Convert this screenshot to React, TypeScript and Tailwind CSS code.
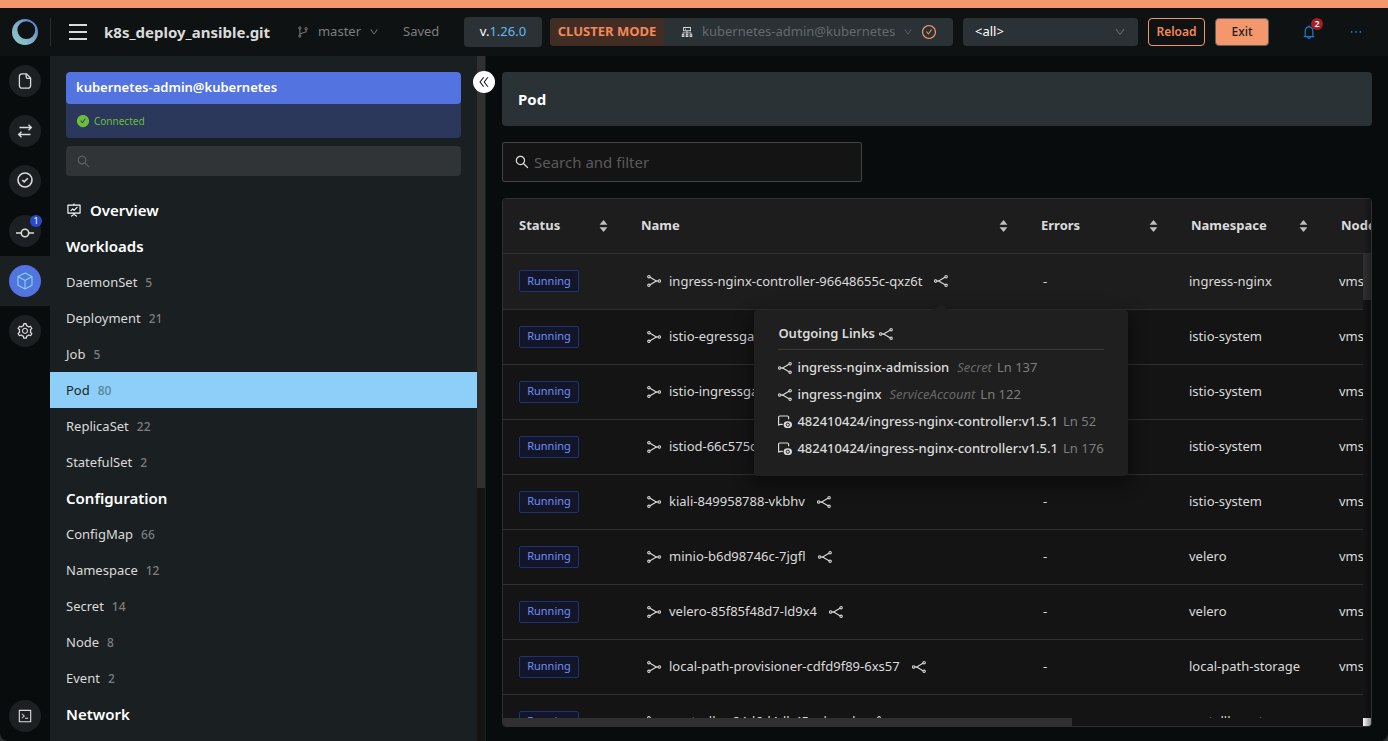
import React from "react";
import {
  AiFillCaretDown,
  AiFillCaretUp,
  AiFillCheckCircle,
  AiOutlineBell,
  AiOutlineBranches,
  AiOutlineCheckCircle,
  AiOutlineCluster,
  AiOutlineCode,
  AiOutlineDoubleLeft,
  AiOutlineDown,
  AiOutlineEllipsis,
  AiOutlineFundProjectionScreen,
  AiOutlineSearch,
  AiOutlineSetting,
} from "react-icons/ai";

interface NavEntry {
  label: string;
  count: number;
}

interface NavSection {
  title: string;
  items: NavEntry[];
}

interface PodRow {
  name: string;
  namespace: string;
}

interface OutgoingLink {
  name: string;
  kind?: string;
  line: number;
}

const sections: NavSection[] = [
  {
    title: "Workloads",
    items: [
      { label: "DaemonSet", count: 5 },
      { label: "Deployment", count: 21 },
      { label: "Job", count: 5 },
      { label: "Pod", count: 80 },
      { label: "ReplicaSet", count: 22 },
      { label: "StatefulSet", count: 2 },
    ],
  },
  {
    title: "Configuration",
    items: [
      { label: "ConfigMap", count: 66 },
      { label: "Namespace", count: 12 },
      { label: "Secret", count: 14 },
      { label: "Node", count: 8 },
      { label: "Event", count: 2 },
    ],
  },
  { title: "Network", items: [] },
];

const pods: PodRow[] = [
  { name: "ingress-nginx-controller-96648655c-qxz6t", namespace: "ingress-nginx" },
  { name: "istio-egressgateway-7475c75b68", namespace: "istio-system" },
  { name: "istio-ingressgateway-6688c7f65d", namespace: "istio-system" },
  { name: "istiod-66c575c5b8-x7k2p", namespace: "istio-system" },
  { name: "kiali-849958788-vkbhv", namespace: "istio-system" },
  { name: "minio-b6d98746c-7jgfl", namespace: "velero" },
  { name: "velero-85f85f48d7-ld9x4", namespace: "velero" },
  { name: "local-path-provisioner-cdfd9f89-6xs57", namespace: "local-path-storage" },
  { name: "controller-84d6d4db45-wkxwd", namespace: "metallb-system" },
];

const links: OutgoingLink[] = [
  { name: "ingress-nginx-admission", kind: "Secret", line: 137 },
  { name: "ingress-nginx", kind: "ServiceAccount", line: 122 },
  { name: "482410424/ingress-nginx-controller:v1.5.1", line: 52 },
  { name: "482410424/ingress-nginx-controller:v1.5.1", line: 176 },
];

const columns = ["Status", "Name", "Errors", "Namespace", "Node"];

const Logo = () => (
  <svg width="26" height="26" viewBox="0 0 26 26" aria-hidden="true">
    <defs>
      <linearGradient id="logo" x1="0" y1="1" x2="1" y2="0">
        <stop offset="0" stopColor="#8fd0c8" />
        <stop offset="0.5" stopColor="#7fabcb" />
        <stop offset="1" stopColor="#4a74d0" />
      </linearGradient>
    </defs>
    <path
      fill="url(#logo)"
      fillRule="evenodd"
      d="M13 0a13 13 0 1 0 0 26 13 13 0 0 0 0-26Zm1.300 2.200a8.900 8.900 0 1 1 0 17.800 8.900 8.900 0 0 1 0-17.800Z"
    />
  </svg>
);

const FileIcon = () => (
  <svg width="16" height="16" viewBox="0 0 16 16" fill="none" stroke="currentColor" strokeWidth="1.3">
    <path d="M9.500 .8H5A2.600 2.600 0 0 0 2.400 3.400v9.200A2.600 2.600 0 0 0 5 15.200h6a2.600 2.600 0 0 0 2.600-2.600V5L9.500 .8Z" />
    <path d="M9.200 1v3a1.300 1.300 0 0 0 1.300 1.300h3" />
  </svg>
);

const CompareIcon = () => (
  <svg width="16" height="16" viewBox="0 0 16 16" fill="none" stroke="currentColor" strokeWidth="1.400">
    <path d="M2.500 4.500H14M11.500 1.800l2.800 2.700-2.800 2.700" />
    <path d="M13.500 11.500H2M4.500 8.800l-2.800 2.700 2.800 2.700" />
  </svg>
);

const ValidateIcon = () => (
  <svg width="18" height="18" viewBox="0 0 18 18" fill="none" stroke="currentColor" strokeWidth="1.600">
    <circle cx="9" cy="8" r="7" />
    <path d="m6.300 8 1.900 1.900 3.600-3.600" />
  </svg>
);

const CommitIcon = () => (
  <svg width="18" height="18" viewBox="0 0 18 18" fill="none" stroke="currentColor" strokeWidth="1.600">
    <circle cx="9" cy="11" r="3.700" />
    <path d="M0 11h5.300M12.700 11H18" />
  </svg>
);

const CubeIcon = () => (
  <svg width="18" height="18" viewBox="0 0 18 18" fill="none" stroke="currentColor" strokeWidth="1.100" strokeLinejoin="round">
    <path d="M9 1 16 4.500v8.700L9 17l-7-3.800V4.500L9 1Z" />
    <path d="M2 4.500 9 8.500l7-4M9 8.500V17" />
  </svg>
);

const IncomingIcon = () => (
  <svg width="14" height="14" viewBox="0 0 14 14" fill="none" stroke="currentColor" strokeWidth="1.100">
    <circle cx="1.900" cy="2.700" r="1.200" />
    <circle cx="1.900" cy="11.300" r="1.200" />
    <circle cx="12.300" cy="7" r="1.200" />
    <path d="M3 3.200 8.500 6.500Q9.500 7 11 7M3 10.800 8.500 7.500Q9.500 7 11 7" />
  </svg>
);

const OutgoingIcon = () => (
  <svg width="14" height="14" viewBox="0 0 14 14" fill="none" stroke="currentColor" strokeWidth="1.100">
    <circle cx="12.100" cy="2.700" r="1.200" />
    <circle cx="12.100" cy="11.300" r="1.200" />
    <circle cx="1.700" cy="7" r="1.200" />
    <path d="M11 3.200 5.500 6.500Q4.500 7 3 7M11 10.800 5.500 7.500Q4.500 7 3 7" />
  </svg>
);

const ImageIcon = () => (
  <svg width="14" height="14" viewBox="0 0 14 14" fill="none" stroke="currentColor" strokeWidth="1.200">
    <path d="M4.800 9.400H2.600L.6 10V2.200A1.200 1.200 0 0 1 1.800 1h7.600a1.200 1.200 0 0 1 1.200 1.200v2" />
    <ellipse cx="9.800" cy="9.700" rx="4.200" ry="3.400" fill="currentColor" stroke="none" />
    <circle cx="9.800" cy="9.700" r="1.600" stroke="#1f1f1f" strokeWidth="1" />
  </svg>
);

const RailButton: React.FC<{
  label: string;
  active?: boolean;
  badge?: number;
  children: React.ReactNode;
}> = ({ label, active, badge, children }) => (
  <div className={`flex h-[50px] items-center justify-center ${active ? "bg-[#1a1f21]" : ""}`}>
    <button
      aria-label={label}
      className={`relative flex h-8 w-8 items-center justify-center rounded-full ${
        active ? "bg-[#5273e0] text-[#82d8e4]" : "bg-[#1c2022] text-[#dbdbdb]"
      }`}
    >
      {children}
      {badge && (
        <span className="absolute top-0 -right-px flex h-3 w-3 items-center justify-center rounded-full bg-[#2b4acb] text-[9px] text-white">
          {badge}
        </span>
      )}
    </button>
  </div>
);

const Rail = () => (
  <nav className="flex w-[50px] shrink-0 flex-col" aria-label="Tools">
    <RailButton label="Files"><FileIcon /></RailButton>
    <RailButton label="Compare"><CompareIcon /></RailButton>
    <RailButton label="Validation"><ValidateIcon /></RailButton>
    <RailButton label="Git" badge={1}><CommitIcon /></RailButton>
    <RailButton label="Dashboard" active><CubeIcon /></RailButton>
    <RailButton label="Settings"><AiOutlineSetting size={18} /></RailButton>
    <div className="mt-auto">
      <RailButton label="Terminal"><AiOutlineCode size={16} /></RailButton>
    </div>
  </nav>
);

const Header = () => (
  <header className="flex h-12 shrink-0 items-center bg-[#0f1213]">
    <div className="flex h-7 w-[51px] shrink-0 items-center justify-center border-r border-[#2a2d2e]">
      <Logo />
    </div>
    <button aria-label="Menu" className="ml-[18px] flex w-[18px] flex-col gap-[5px]">
      <span className="h-0.5 w-full bg-[#dbdbdb]" />
      <span className="h-0.5 w-full bg-[#dbdbdb]" />
      <span className="h-0.5 w-full bg-[#dbdbdb]" />
    </button>
    <h1 className="ml-[17px] w-[168px] text-[15px] font-bold whitespace-nowrap text-[#dbdbdb]">k8s_deploy_ansible.git</h1>
    <button className="ml-6 flex w-[83px] items-center gap-2 text-[13px] text-[#7d7d7d]">
      <AiOutlineBranches size={14} />
      master
      <AiOutlineDown size={10} />
    </button>
    <span className="ml-6 w-[37px] text-[13px] text-[#7d7d7d]">Saved</span>
    <button className="ml-6 h-[30px] w-[78px] rounded bg-[#2b3235] text-[13px] text-[#65b7f3]">
      <span className="text-white">v.</span>1.26.0
    </button>
    <div className="ml-2 flex h-7 min-w-0 flex-1 overflow-hidden rounded bg-[#2b3235]">
      <span className="flex w-[114px] shrink-0 items-center justify-center bg-[#422d25] text-[13px] font-bold whitespace-nowrap text-[#f4885a]">
        CLUSTER MODE
      </span>
      <button className="flex items-center gap-2 pl-4 text-[13px] text-[#646a6c]">
        <AiOutlineCluster size={14} className="text-[#dbdbdb]" />
        kubernetes-admin@kubernetes
        <AiOutlineDown size={10} />
        <AiOutlineCheckCircle size={16} className="text-[#f4976c]" />
      </button>
    </div>
    <div className="relative ml-[10px]">
      <select
        aria-label="Namespace"
        className="block h-7 w-[175px] appearance-none rounded bg-[#2b3235] pl-3 text-[13px] text-white outline-none"
      >
        <option>&lt;all&gt;</option>
      </select>
      <AiOutlineDown size={12} className="pointer-events-none absolute top-2 right-3 text-[#6a6f71]" />
    </div>
    <button className="ml-[10px] h-7 w-[57px] rounded border border-[#f4976c] text-[12px] font-semibold text-[#f4885a]">
      Reload
    </button>
    <button className="ml-[10px] h-7 w-[54px] rounded border border-[#5c5f60] bg-[#f4976c] text-[12px] font-medium text-[#1a1f21]">
      Exit
    </button>
    <button aria-label="Notifications" className="relative ml-8 text-[#177ddc]">
      <AiOutlineBell size={16} />
      <span className="absolute -top-1.5 -right-1.5 flex h-3 w-3 items-center justify-center rounded-full bg-[#a61d24] text-[9px] font-semibold text-white">
        2
      </span>
    </button>
    <button aria-label="More" className="mr-6 ml-[31px] text-[#177ddc]">
      <AiOutlineEllipsis size={16} />
    </button>
  </header>
);

const Sidebar = () => (
  <aside className="relative flex w-[436px] shrink-0 border-r border-[#1a1f21] bg-[#1a1f21]">
    <div className="min-w-0 flex-1 overflow-hidden pt-4">
      <div className="mx-4 overflow-hidden rounded bg-[#2b385b]">
        <div className="flex h-8 items-center rounded bg-[#5273e0] px-[10px] text-[13px] font-semibold text-white">
          kubernetes-admin@kubernetes
        </div>
        <div className="flex h-[34px] items-center gap-1 px-[10px] text-[10px] text-[#6abe39]">
          <AiFillCheckCircle size={14} />
          Connected
        </div>
      </div>
      <label className="mx-4 mt-2 flex h-[30px] items-center rounded bg-[#303436] px-[10px] text-[#5f6365]">
        <AiOutlineSearch size={15} />
        <input aria-label="Filter resources" className="ml-2 min-w-0 flex-1 bg-transparent text-[13px] text-white outline-none" />
      </label>
      <nav className="mt-4" aria-label="Resources">
        <a href="#overview" className="flex h-9 items-center gap-2 px-4 text-[15px] font-semibold text-white">
          <AiOutlineFundProjectionScreen size={16} />
          Overview
        </a>
        {sections.map((section) => (
          <div key={section.title}>
            <h2 className="flex h-9 items-center px-4 text-[15px] font-semibold text-white">{section.title}</h2>
            {section.items.map((item) => {
              const selected = item.label === "Pod";
              return (
                <a
                  key={item.label}
                  href={`#${item.label}`}
                  className={`flex h-9 items-center gap-2 px-4 pt-0.5 text-[13px] ${
                    selected ? "bg-[#8dcff8] text-[#1a1f21]" : "text-[#dbdbdb]"
                  }`}
                >
                  {item.label}
                  <span className={`text-[12px] font-medium ${selected ? "text-[#5a7f96]" : "text-[#7d7d7d]"}`}>
                    {item.count}
                  </span>
                </a>
              );
            })}
          </div>
        ))}
      </nav>
    </div>
    <div className="w-2 shrink-0 bg-[#141414]">
      <div className="h-[63%] bg-[#303030]" />
    </div>
    <button
      aria-label="Collapse sidebar"
      className="absolute top-[15px] -right-[10px] flex h-[22px] w-[22px] items-center justify-center rounded-full bg-white text-[#1a1f21]"
    >
      <AiOutlineDoubleLeft size={14} />
    </button>
  </aside>
);

const LinksPopover = () => (
  <div className="absolute top-9 left-1/2 z-20 w-[374px] -translate-x-1/2 rounded-sm bg-[#1f1f1f] px-6 pt-3 pb-[14px] shadow-[0_6px_16px_4px_rgba(0,0,0,0.4)]">
    <span className="absolute -top-1.5 left-1/2 -translate-x-1/2 border-x-8 border-b-[6px] border-x-transparent border-b-[#1f1f1f]" />
    <div className="mb-1 flex h-7 items-center gap-1 border-b border-[#3a3a3a] pb-1 text-[13px] font-semibold text-[#dbdbdb]">
      Outgoing Links <OutgoingIcon />
    </div>
    <ul>
      {links.map((link) => (
        <li key={link.line} className="flex h-[27px] items-center text-[13px] whitespace-nowrap text-[#dbdbdb]">
          {link.kind ? <OutgoingIcon /> : <ImageIcon />}
          <a href="#link" className="ml-[5px] font-medium">{link.name}</a>
          {link.kind && <span className="ml-2 text-[#686868] italic">{link.kind}</span>}
          <span className="ml-[5px] text-[#7d7d7d]">Ln {link.line}</span>
        </li>
      ))}
    </ul>
  </div>
);

const Columns = () => (
  <colgroup>
    <col className="w-[122px]" />
    <col className="w-[400px]" />
    <col className="w-[150px]" />
    <col className="w-[150px]" />
    <col className="w-[650px]" />
  </colgroup>
);

const PodTable = () => (
  <div className="relative flex min-h-0 flex-1 flex-col overflow-hidden rounded border border-[#303030] bg-[#141414] text-[13px] text-[#dbdbdb]">
    <div className="shrink-0 overflow-hidden border-b border-[#303030] bg-[#1d1d1d]">
      <table className="w-[1472px] table-fixed">
        <Columns />
        <thead>
          <tr className="h-[54px]">
            {columns.map((column) => (
              <th key={column} scope="col" className="px-4 text-left font-bold">
                <span className="flex items-center justify-between">
                  {column}
                  <button aria-label={`Sort by ${column}`} className="flex flex-col text-[#bfbfbf]">
                    <AiFillCaretUp size={11} className="-mb-1" />
                    <AiFillCaretDown size={11} />
                  </button>
                </span>
              </th>
            ))}
          </tr>
        </thead>
      </table>
    </div>
    <div className="flex min-h-0 flex-1">
      <div className="min-w-0 flex-1 overflow-hidden">
        <table className="w-[1472px] table-fixed">
          <Columns />
          <tbody>
            {pods.map((pod, index) => (
              <tr key={pod.name} className={`h-[55px] border-b border-[#303030] ${index === 0 ? "bg-[#1d1d1d]" : ""}`}>
                <td className="px-4">
                  <span className="flex h-[22px] w-[60px] items-center justify-center rounded-xs border border-[#203175] bg-[#131629] text-[11px] text-[#6f8ff5]">
                    Running
                  </span>
                </td>
                <td className="pl-[22px]">
                  <div className="flex items-center">
                    <IncomingIcon />
                    <a href="#pod" className="mr-3 ml-2">{pod.name}</a>
                    <span className="relative">
                      <OutgoingIcon />
                      {index === 0 && <LinksPopover />}
                    </span>
                  </div>
                </td>
                <td className="px-[18px]">-</td>
                <td className="px-[14px]">{pod.namespace}</td>
                <td className="px-[14px]">vms-worker</td>
              </tr>
            ))}
          </tbody>
        </table>
      </div>
      <div className="w-2 shrink-0">
        <div className="h-[46px] bg-[#303030]" />
      </div>
    </div>
    <div className="flex h-2 shrink-0 justify-between">
      <div className="w-[569px] bg-[#303030]" />
      <div className="w-2 bg-gradient-to-r from-white to-[#cccccc]" />
    </div>
    <div className="pointer-events-none absolute top-0 right-0 h-full w-2 bg-gradient-to-r from-transparent to-black/30" />
  </div>
);

const App = () => {
  return (
    <div className="h-screen bg-[#2c2f30] font-['Noto_Sans','Open_Sans',sans-serif]">
      <div className="flex h-full flex-col overflow-hidden rounded-b-lg bg-[#080c0d]">
        <div className="h-2 shrink-0 bg-[#f4976c]" />
        <Header />
        <div className="flex min-h-0 flex-1">
          <Rail />
          <Sidebar />
          <main className="flex min-w-0 flex-1 flex-col gap-4 px-4 pt-4 pb-[14px]">
            <h2 className="flex h-[54px] shrink-0 items-center rounded bg-[#2b3235] px-4 text-[15px] font-bold text-white">
              Pod
            </h2>
            <label className="flex h-10 w-[360px] shrink-0 items-center gap-1 rounded-xs border border-[#434343] bg-[#141414] px-[11px] text-[#dbdbdb]">
              <AiOutlineSearch size={16} />
              <input
                aria-label="Search and filter"
                placeholder="Search and filter"
                className="min-w-0 flex-1 bg-transparent text-[15px] outline-none placeholder:text-[#5a5a5a]"
              />
            </label>
            <PodTable />
          </main>
        </div>
      </div>
    </div>
  );
};

export default App;
